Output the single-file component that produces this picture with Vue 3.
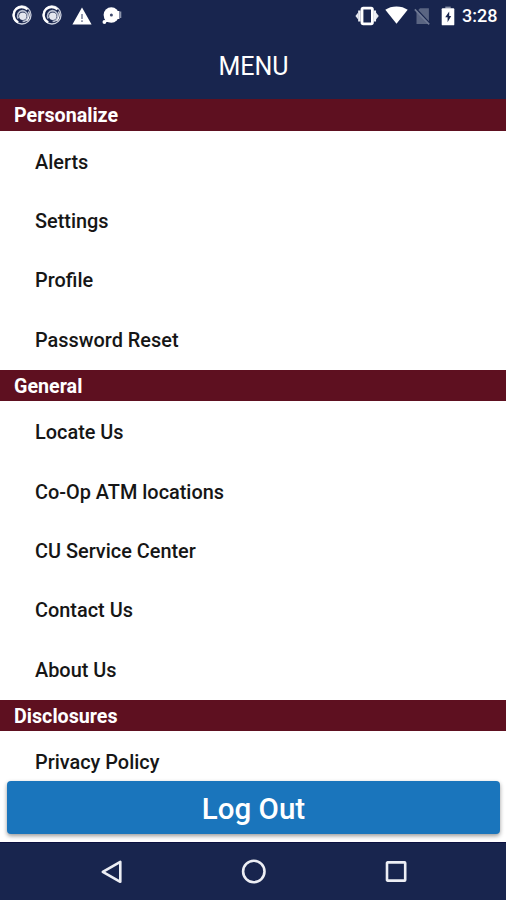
<template>
  <div class="screen">
    <header class="top">
      <div class="status-bar">
        <div class="status-left">
          <svg v-for="n in 2" :key="n" class="icon-swirl" viewBox="0 0 20 20">
            <circle cx="10" cy="10" r="9" fill="none" stroke="#cdd2df" stroke-width="1.3" />
            <path d="M6.2 17.6A8.6 8.6 0 0 1 4.2 4Q9.6 -0.2 15.6 4.4" fill="none" stroke="#fff" stroke-width="2.3" />
            <path d="M6.2 13.5A5.4 5.4 0 0 1 10.4 5.6A5.6 5.6 0 0 1 15.6 12.4Q14.4 16.2 10.6 16.4" fill="none" stroke="#b9c0d1" stroke-width="1.7" />
            <circle cx="10.8" cy="11.2" r="3.7" fill="#e4e7ef" />
            <path d="M16.6 6.4Q18.6 11 14.6 16.2" fill="none" stroke="#fff" stroke-width="1.2" />
          </svg>
          <svg class="icon-warning" viewBox="0 0 20 18">
            <path d="M10 0.5L19.6 17.5H0.4Z" fill="#fff" />
            <path d="M9.1 7h1.8v5H9.1zM9.1 13.2h1.8V15H9.1z" fill="#8a91a6" />
          </svg>
          <svg class="icon-disc" viewBox="0 0 20 18">
            <circle cx="9.3" cy="8" r="7.7" fill="#fff" />
            <path d="M14 4h3.4v8H14z" fill="#fff" />
            <path d="M17.4 4.5h1.9v6.5h-1.9z" fill="#8b93ab" />
            <circle cx="2.4" cy="15" r="1.9" fill="#fff" />
            <path d="M2.4 10.5L7 15L3.5 15Z" fill="#fff" />
            <circle cx="9.4" cy="8" r="1.5" fill="#3f4a6d" />
          </svg>
        </div>
        <div class="status-right">
          <svg class="icon-vibrate" viewBox="0 0 24 20">
            <rect x="7" y="2.2" width="10.4" height="15.6" rx="1.3" fill="none" stroke="#fff" stroke-width="2.8" />
            <path d="M4.4 4.6v10.8M19.8 4.6v10.8" stroke="#eef0f5" stroke-width="2.5" />
            <path d="M3.2 6.6V13.4L0.4 10ZM21 6.6V13.4L23.8 10Z" fill="#e4e7ee" />
          </svg>
          <svg class="icon-wifi" viewBox="0 0 23 18">
            <path d="M11.5 17.7L0.3 3.8Q5 0.4 11.5 0.4T22.7 3.8Z" fill="#fff" />
          </svg>
          <svg class="icon-nosim" viewBox="0 0 17 18">
            <path d="M6 1.2H14.9V17H2.5V4.8Z" fill="#5a6582" />
            <path d="M1.6 1.4L16.4 17" stroke="#18254e" stroke-width="1.7" />
            <path d="M0.8 2.4L15.2 17.4" stroke="#707a95" stroke-width="1.6" />
          </svg>
          <svg class="icon-battery" viewBox="0 0 14 20">
            <path d="M4.3 0.6h5.4v2H4.3z" fill="#8b93a8" />
            <rect x="0.7" y="2.3" width="12.6" height="17" rx="0.9" fill="#fff" />
            <path d="M8.2 5.5L4.2 11.2H6.6V16.2L10.2 10H8.2Z" fill="#18254e" />
          </svg>
          <span class="time">3:28</span>
        </div>
      </div>
      <h1 class="title">MENU</h1>
    </header>

    <main class="menu">
      <section v-for="section in sections" :key="section.title" class="section">
        <h2 class="section-title">{{ section.title }}</h2>
        <div v-for="item in section.items" :key="item" class="item">{{ item }}</div>
      </section>
    </main>

    <div class="logout-wrap">
      <button class="btn-logout">Log Out</button>
    </div>

    <nav class="nav-bar">
      <svg class="nav-icon back" viewBox="0 0 24 26">
        <path d="M20.3 2.8V22.8L2.8 12.8Z" />
      </svg>
      <svg class="nav-icon home" viewBox="0 0 26 26">
        <circle cx="12.8" cy="12.5" r="10.7" />
      </svg>
      <svg class="nav-icon recent" viewBox="0 0 24 24">
        <rect x="3" y="2.4" width="18.2" height="18.2" rx="0.6" />
      </svg>
    </nav>
  </div>
</template>

<script setup>
const sections = [
  {
    title: 'Personalize',
    items: ['Alerts', 'Settings', 'Profile', 'Password Reset']
  },
  {
    title: 'General',
    items: ['Locate Us', 'Co-Op ATM locations', 'CU Service Center', 'Contact Us', 'About Us']
  },
  {
    title: 'Disclosures',
    items: ['Privacy Policy']
  }
]
</script>

<style>
body {
  margin: 0;
  background: #fff;
}
</style>

<style scoped>
.screen {
  display: flex;
  flex-direction: column;
  width: 100%;
  height: 900px;
  overflow: hidden;
  background: #fff;
  font-family: Roboto, "Liberation Sans", sans-serif;
}

.top {
  flex: none;
  height: 99px;
  background: #18254e;
  color: #fff;
}

.status-bar {
  display: flex;
  justify-content: space-between;
  height: 32px;
  padding: 0 9px 0 12px;
  box-sizing: border-box;
}

.status-left,
.status-right {
  display: flex;
  align-items: center;
}

.icon-swirl {
  width: 20px;
  height: 20px;
  margin: 0 10px 2px 0;
}

.icon-warning {
  width: 20px;
  height: 18px;
  margin: 0 10px 1px 0;
}

.icon-disc {
  width: 20px;
  height: 18px;
}

.icon-vibrate {
  width: 24px;
  height: 20px;
  margin: 0 6px 1px 0;
}

.icon-wifi {
  width: 23px;
  height: 18px;
  margin: 0 6px 2px 0;
}

.icon-nosim {
  width: 17px;
  height: 18px;
  margin: 0 10px 1px 0;
}

.icon-battery {
  width: 14px;
  height: 20px;
  margin: 0 7px 1px 0;
}

.time {
  width: 35px;
  font-size: 18px;
  font-weight: 500;
  line-height: 32px;
  white-space: nowrap;
}

.title {
  margin: 0;
  padding-left: 1px;
  font-size: 25px;
  font-weight: 400;
  line-height: 69px;
  text-align: center;
}

.menu {
  flex: none;
  height: 682px;
  overflow: hidden;
}

.section {
  padding-bottom: 1.4px;
}

.section-title {
  height: 31.5px;
  margin: 0;
  padding-left: 14px;
  background: #5e1020;
  color: #fff;
  font-size: 19.7px;
  font-weight: 700;
  line-height: 34px;
}

.item {
  height: 59.45px;
  padding-left: 35px;
  color: #161616;
  font-size: 19.9px;
  font-weight: 500;
  line-height: 64px;
}

.logout-wrap {
  flex: 1;
  padding: 0 6px 0 7px;
}

.btn-logout {
  display: block;
  width: 100%;
  height: 52.5px;
  padding: 0;
  border: none;
  border-radius: 4px;
  background: #1a75bc;
  box-shadow: 0 2px 4px rgba(0, 0, 0, 0.4);
  color: #fff;
  font-family: inherit;
  font-size: 29.5px;
  font-weight: 500;
  line-height: 57px;
}

.nav-bar {
  flex: none;
  display: flex;
  align-items: center;
  height: 58px;
  border-top: 1px solid #0b1040;
  box-sizing: border-box;
  background: #18254e;
}

.nav-icon {
  fill: none;
  stroke: #eceef4;
  stroke-width: 2.6;
  stroke-linejoin: round;
}

.back {
  width: 24px;
  height: 26px;
  margin-left: 100px;
}

.home {
  width: 26px;
  height: 26px;
  margin-left: 117px;
}

.recent {
  width: 24px;
  height: 24px;
  margin-left: 117px;
}
</style>
